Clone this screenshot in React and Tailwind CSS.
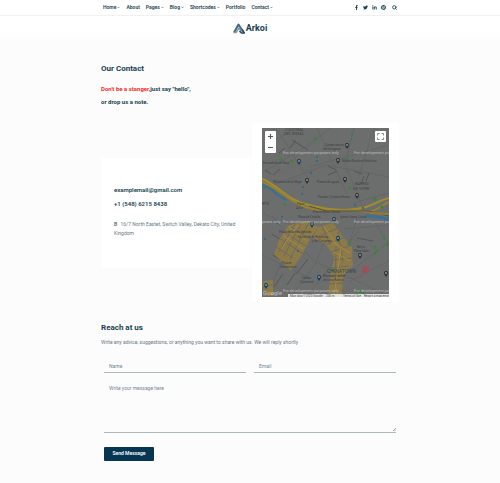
import React from "react";
import { FaFacebookF, FaTwitter, FaLinkedinIn, FaPinterest } from "react-icons/fa";
import { ChevronDown, Search } from "lucide-react";

const navItems = [
  { label: "Home", menu: true },
  { label: "About" },
  { label: "Pages", menu: true },
  { label: "Blog", menu: true },
  { label: "Shortcodes", menu: true },
  { label: "Portfolio" },
  { label: "Contact", menu: true },
];

const socials = [
  { label: "Facebook", Icon: FaFacebookF },
  { label: "Twitter", Icon: FaTwitter },
  { label: "LinkedIn", Icon: FaLinkedinIn },
  { label: "Pinterest", Icon: FaPinterest },
];

const TopBar = () => {
  return (
    <div className="border-b border-[#f0f2f2] bg-white">
      <div className="mx-auto flex h-[15px] max-w-[294px] items-center justify-between text-[5px] font-semibold">
        <nav className="flex gap-[6px]">
          {navItems.map(({ label, menu }) => (
            <a key={label} href="#" className="flex items-center gap-px whitespace-nowrap">
              {label}
              {menu && <ChevronDown className="size-[3px]" strokeWidth={4} />}
            </a>
          ))}
        </nav>
        <div className="flex items-center gap-1">
          {socials.map(({ label, Icon }) => (
            <a key={label} href="#" aria-label={label}>
              <Icon className="size-[5px]" />
            </a>
          ))}
          <button type="button" aria-label="Search" className="ml-[2px]">
            <Search className="size-[5px]" strokeWidth={4} />
          </button>
        </div>
      </div>
    </div>
  );
};

const Logo = () => {
  return (
    <a href="#" className="flex items-center gap-px text-[9px] leading-none font-bold">
      <svg viewBox="0 0 24 22" className="h-[11px] w-3" fill="none">
        <path d="M2 19 11 3l9 14" stroke="#3f6a7e" strokeWidth="4" strokeLinejoin="round" />
        <path d="M1 19h5l6-9 5 7" stroke="#7898a8" strokeWidth="3" />
        <path d="M13 16l4 4h6l-5-7" stroke="#24495c" strokeWidth="3" />
      </svg>
      Arkoi
    </a>
  );
};

const pins = [
  [37, 35, "#173f5c"],
  [76, 34, "#303030"],
  [85, 19, "#303030"],
  [45, 54, "#303030"],
  [83, 53, "#303030"],
  [95, 69, "#303030"],
  [50, 98, "#1c4054"],
  [72, 93, "#1c4054"],
  [76, 112, "#173f5c"],
  [98, 129, "#303030"],
  [57, 151, "#173f5c"],
  [4, 159, "#173f5c"],
  [124, 147, "#303030"],
];

const labels = [
  [63, 18, "Conservatorio"],
  [61, 22, "de Tarragona"],
  [1, 36, "Escuadrilla de Pazo"],
  [80, 34, "Museo Nacional Histórico"],
  [11, 55, "Ministerio de la Mujer"],
  [55, 55, "Puente de aguas"],
  [56, 70, "Parador Turístico Rimac"],
  [35, 77, "Plaza"],
  [34, 81, "Acho"],
  [51, 85, "Puente Balta Central"],
  [36, 90, "Plaza de Castilla"],
  [78, 90, "Iglesia Santo Cristo"],
  [17, 105, "Plaza de Armas Gerardo"],
  [36, 110, "Museo de la Republica"],
  [50, 114, "y del Congreso"],
  [95, 120, "Barrio"],
  [92, 124, "Plaza Italia"],
  [20, 136, "Parque"],
  [18, 140, "Universitario"],
  [40, 151, "Centro"],
  [38, 155, "Comercial"],
  [61, 149, "Mercado Central"],
  [61, 153, "de Lima Ramon"],
];

const greens = [
  [52, 11], [89, 6], [29, 33], [18, 31], [84, 31], [87, 60], [22, 76],
  [112, 71], [86, 116], [70, 142], [112, 119], [121, 110], [119, 79],
];

const blues = [
  [54, 28], [54, 32], [48, 44], [40, 58], [39, 65], [92, 76], [100, 79], [14, 94], [19, 88], [2, 110], [35, 122],
];

const watermarks = [
  [21, 26], [92, 26], [-37, 95], [21, 95], [92, 95], [21, 164], [92, 164],
];

const Map = () => {
  return (
    <div className="relative">
      <svg
        viewBox="0 0 127 169"
        className="block w-full overflow-hidden bg-[#6c6d6d]"
        role="img"
        aria-label="Map"
        fill="none"
      >
        {/* minor streets */}
        <g stroke="#656667" strokeWidth="1">
          <path d="M0 20l34-20M0 45l48-29 20-16M14 0l31 49M55 0l30 66M92 0l-9 37 18 42M127 17l-80 22M0 61l64-24 63 12M112 0l-15 48M127 65L91 75" />
          <path d="M0 85l34 14L5 169M0 127l48 23M12 91l42 44-25 34M74 86L54 134l73 34M127 97l-44 4M95 90l-24 79M127 114l-38 29M109 89l18 27M88 153l39-20M44 169l53-67" />
        </g>
        <g stroke="#535657" strokeWidth="1">
          <path d="M30 12l16 10M28 20l6-8M17 25l6-5M3 42l6 4M11 47l7-6M66 38l8 4M66 47l9-4M92 43l8 3M102 48l-3 8M107 45l-3 8M10 106l12 8M11 127l11 7M91 132l-8 11M33 145l-8 12M21 146l-9 13M46 131l-12 15M95 110l16 3" />
        </g>

        {/* historic centre */}
        <g fill="#8d7a49">
          <path d="M27 97l19-4 10 6-9 14-7 14-11 16-17-17 5-14z" />
          <path d="M56 99l15-4 10 14 9 10 1 18-9 9-3 23H66l2-19 4-21-8-13-13-6z" />
          <path d="M1 153l10-1v16H1z" />
        </g>
        <g stroke="#6c6a62" strokeWidth="1">
          <path d="M17 110l26 17M22 104l22 14M29 99l22 13M13 118l18 12M33 96l-16 28M40 94l-18 34M47 94l-19 37M60 98l8 18M57 108l19-8M65 116l19-7M69 124l21-7M70 132l21-2M69 140l18-2M68 148l14-1M67 156l14-1M76 104l5 30M74 118l-1 51M0 160l12-4" />
        </g>
        <g stroke="#a58b42" strokeWidth="1">
          <path d="M27 99l18 14M22 108l19 13M36 97l-17 24M62 99l13 18M70 114l18 11M72 124l16 9M71 142l13 3M79 119l-7 49" />
        </g>

        {/* river and motorway */}
        <path d="M0 57c17 6 10 9 25 15" stroke="#35719a" strokeWidth="2" />
        <path d="M0 51c18 7 24 21 47 26 19 5 39 7 57 2 10-3 14-7 23-9" stroke="#a58d2e" strokeWidth="2" />
        <path d="M0 54c20 7 28 24 57 28 17 2 29-1 41 1 15 3 18-4 29-9" stroke="#98822c" strokeWidth="2" />
        <path d="M47 78l17 5h43l20 5" stroke="#55554a" strokeWidth="1" />
        <path d="M103 88c10 0 17 1 24 4" stroke="#397294" strokeWidth="3" />
        <path d="M108 85l19 1" stroke="#9b7c2a" strokeWidth="2" />

        {greens.map(([x, y]) => (
          <path key={`${x}-${y}`} d={`M${x - 1} ${y}l2-2 2 3-2 1z`} fill="#3d8243" />
        ))}
        {blues.map(([x, y]) => (
          <rect key={`${x}-${y}`} x={x} y={y} width="2" height="2" fill="#336a84" />
        ))}
        <path d="M94 163l8 2M112 126l4-4M123 117l4-1" stroke="#39843c" strokeWidth="2" />
        <rect x="100" y="138" width="7" height="7" fill="#94555a" />
        <path d="M102 140l3 3m0-3l-3 3M98 149l3 1M19 44l3-1M31 34l2-2" stroke="#b04848" strokeWidth="1" />

        {labels.map(([x, y, text]) => (
          <text key={`${x}-${y}`} x={x} y={y} fill="#3d4143" fontSize="3">{text}</text>
        ))}
        <g fill="#434546" fontSize="4">
          <text x="23" y="3">CULTURAL</text>
          <text x="22" y="7">DEL RIMAC</text>
          <text x="93" y="57">BARRIO</text>
          <text x="91" y="62">DE VITRE</text>
          <text x="0" y="77">RTE</text>
        </g>
        <text x="65" y="145" fill="#36424a" fontSize="5">CHINATOWN</text>

        {pins.map(([x, y, color]) => (
          <g key={`${x}-${y}`}>
            <path d={`M${x} ${y + 2}c-3-4-2-6 0-6s3 2 0 6z`} fill={color} />
            <circle cx={x} cy={y - 2} r="1" fill="#8d999e" />
          </g>
        ))}

        {watermarks.map(([x, y]) => (
          <text key={`${x}-${y}`} x={x} y={y} fill="#bcbcbc" fontSize="4">For development purposes only</text>
        ))}

        <path d="M26 166h101v3H26z" fill="#e2e2e2" />
        <text x="28" y="169" fill="#444" fontSize="3">Map data ©2020 Google</text>
        <text x="64" y="169" fill="#444" fontSize="3">200 m</text>
        <text x="81" y="169" fill="#444" fontSize="3">Terms of Use</text>
        <text x="102" y="169" fill="#444" fontSize="3">Report a map error</text>
        <text x="1" y="167" fontSize="6" fontWeight="500">
          <tspan fill="#8fb6f2">G</tspan>
          <tspan fill="#e79a92">o</tspan>
          <tspan fill="#ecd07c">o</tspan>
          <tspan fill="#8fb6f2">g</tspan>
          <tspan fill="#8fc796">l</tspan>
          <tspan fill="#e79a92">e</tspan>
        </text>
      </svg>

      <div className="absolute top-[3px] left-[3px] flex w-[11px] flex-col rounded-[1px] bg-white">
        <button type="button" aria-label="Zoom in" className="flex h-[11px] items-center justify-center">
          <svg viewBox="0 0 7 7" className="size-[5px]" stroke="#555" strokeWidth="1.5">
            <path d="M0 3.5h7M3.5 0v7" />
          </svg>
        </button>
        <button type="button" aria-label="Zoom out" className="flex h-[11px] items-center justify-center">
          <svg viewBox="0 0 7 7" className="size-[5px]" stroke="#555" strokeWidth="1.5">
            <path d="M0 3.5h7" />
          </svg>
        </button>
      </div>
      <button
        type="button"
        aria-label="Toggle fullscreen"
        className="absolute top-[3px] right-[3px] flex size-[11px] items-center justify-center rounded-[1px] bg-white"
      >
        <svg viewBox="0 0 14 14" className="size-[7px]" fill="none" stroke="#888" strokeWidth="2">
          <path d="M1 5V1h4M9 1h4v4M13 9v4H9M5 13H1V9" />
        </svg>
      </button>
    </div>
  );
};

const ContactForm = () => {
  const field =
    "block w-full border-b border-[#a9b9bc] bg-transparent px-[5px] text-[5px] text-[#506a75] outline-none placeholder:text-[#718790] placeholder:opacity-100";

  return (
    <form className="mt-[14px] px-[3px]">
      <div className="grid grid-cols-2 gap-2">
        <input type="text" aria-label="Name" placeholder="Name" className={`${field} h-[13px]`} />
        <input type="email" aria-label="Email" placeholder="Email" className={`${field} h-[13px]`} />
      </div>
      <div className="relative mt-2">
        <textarea
          aria-label="Write your message here"
          placeholder="Write your message here"
          className={`${field} h-[52px] resize-none pt-1 leading-[6px]`}
        />
        <svg viewBox="0 0 4 4" className="absolute right-0 bottom-[2px] size-[3px]" stroke="#84969a">
          <path d="M0 4L4 0M2 4l2-2" />
        </svg>
      </div>
      <button
        type="button"
        className="mt-[14px] h-[14px] w-[50px] rounded-[1px] bg-[#073652] text-center text-[5px] font-semibold text-white"
      >
        Send Message
      </button>
    </form>
  );
};

const App = () => {
  return (
    <div className="min-h-screen bg-[#fcfcfc] font-[Roboto,sans-serif] text-[#173f52]">
      <header>
        <TopBar />
        <div className="flex h-6 items-center justify-center bg-linear-to-b from-white from-60% to-[#fcfcfc]">
          <Logo />
        </div>
      </header>

      <main className="mx-auto max-w-[298px] pt-6">
        <h1 className="text-[8px] leading-[10px] font-bold">Our Contact</h1>
        <p className="mt-2 text-[6px] leading-[13px] font-bold">
          <span className="text-[#f32c1e]">Don't be a stanger,</span>just say "hello",
          <br />
          or drop us a note.
        </p>

        <section className="mt-[15px] grid grid-cols-[150fr_147fr] items-center gap-px">
          <div className="bg-white px-[13px] pt-[25px] pb-[30px]">
            <div className="flex flex-col text-[6px] leading-[14px] font-semibold">
              <a href="mailto:examplemail@gmail.com">examplemail@gmail.com</a>
              <a href="tel:+154862158438">+1 (548) 6215 8438</a>
            </div>
            <address className="mt-[9px] text-[5px] leading-[9px] text-[#647984] not-italic">
              <b className="mr-[2px]">B</b> 16/7 North Eastet, Switch Valley, Dekato City, United Kingdom
            </address>
          </div>
          <div className="bg-white px-[10px] py-[5px]">
            <Map />
          </div>
        </section>

        <section className="mt-[21px] pb-5">
          <h2 className="text-[8px] leading-[10px] font-bold">Reach at us</h2>
          <p className="mt-[5px] text-[5px] leading-2 text-[#647984]">
            Write any advice, suggestions, or anything you want to share with us. We will reply shortly
          </p>
          <ContactForm />
        </section>
      </main>
    </div>
  );
};

export default App;
